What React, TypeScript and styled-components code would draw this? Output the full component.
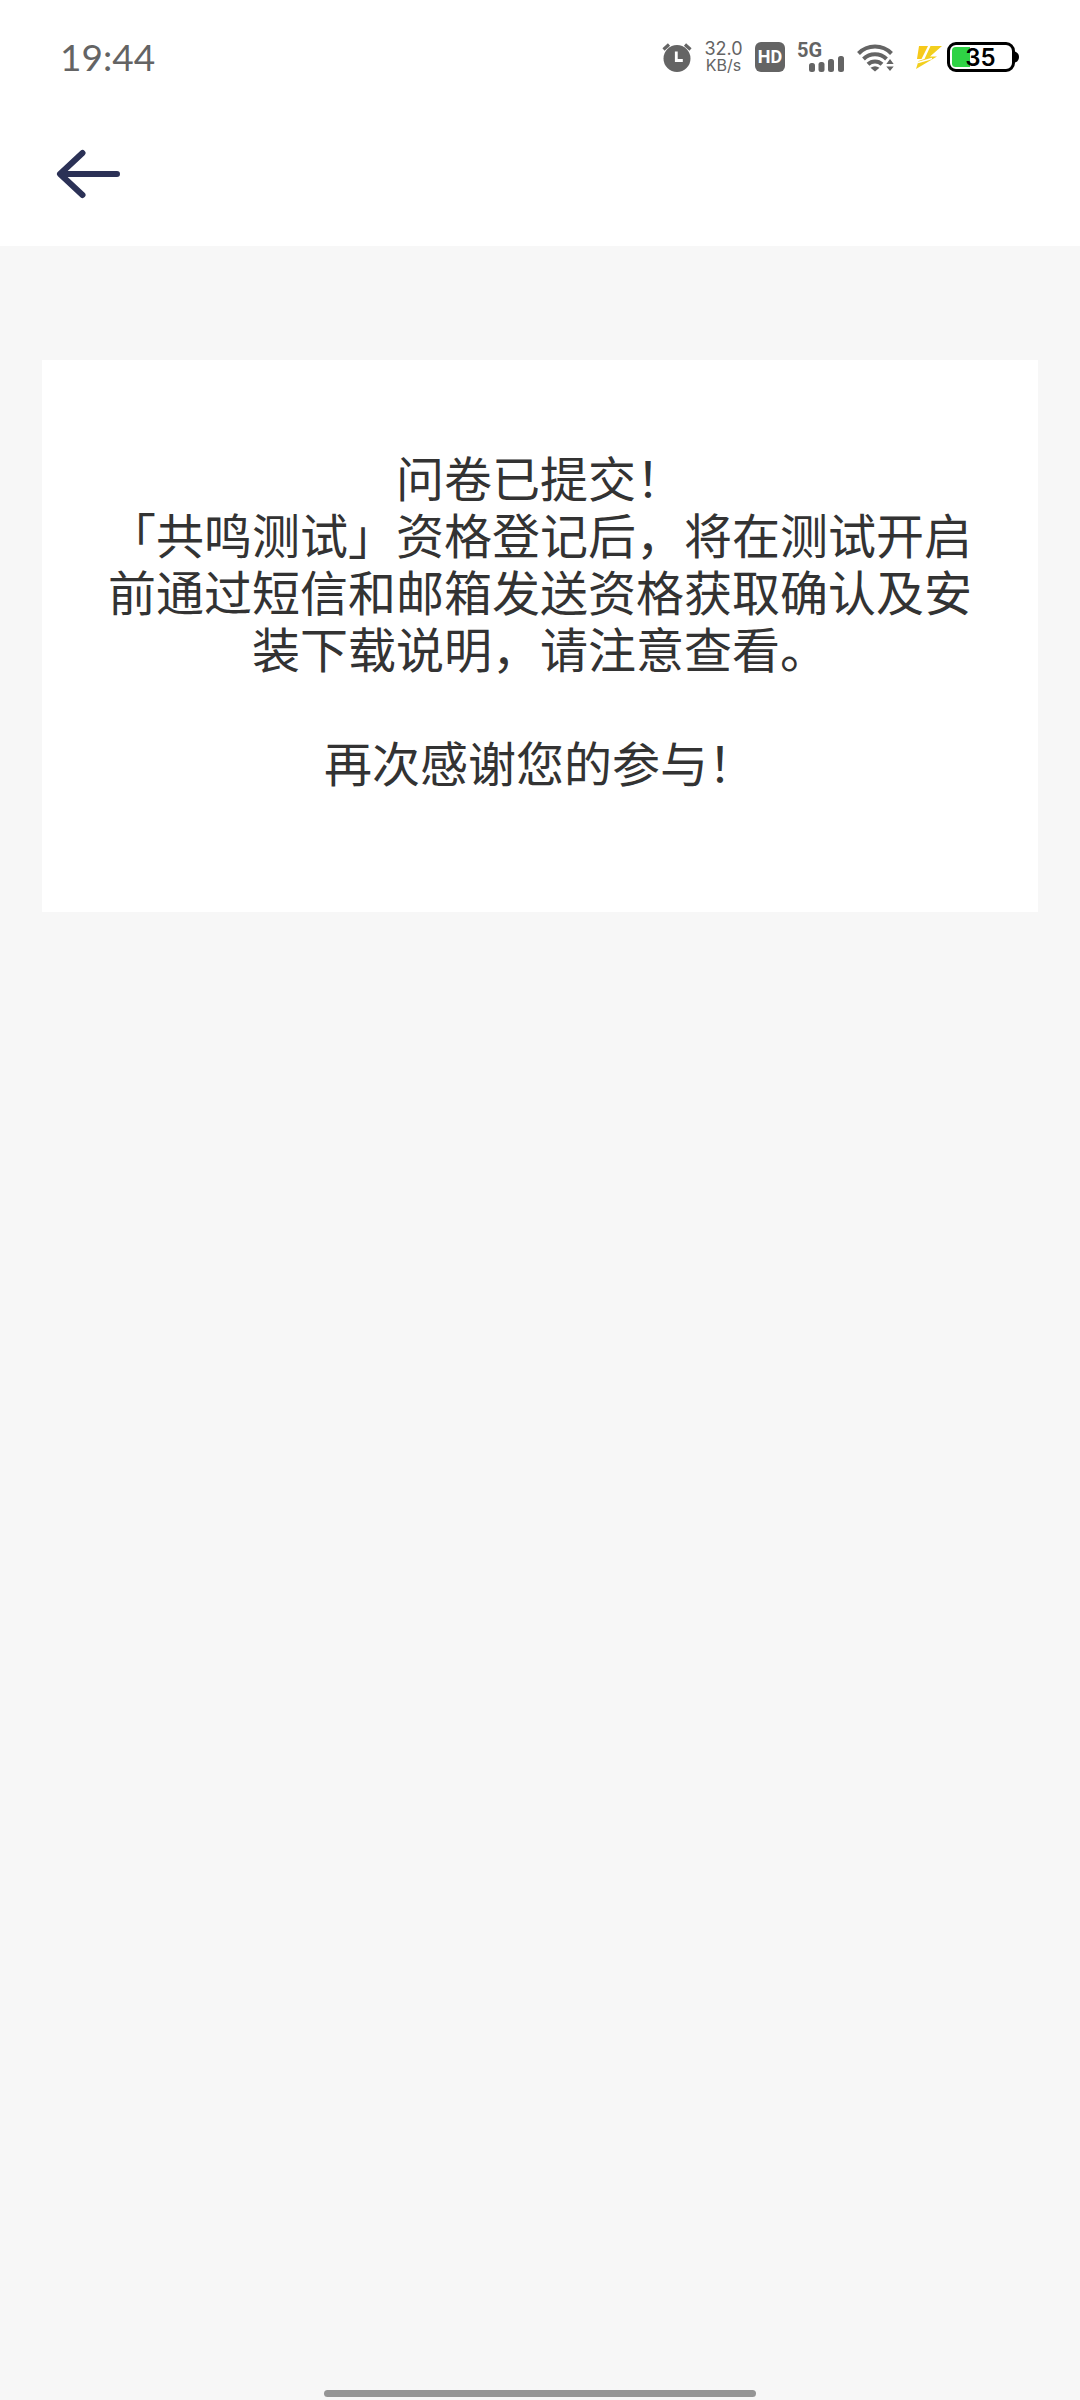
import React from "react";
import styled, { createGlobalStyle } from "styled-components";

const INK = "#646464";
const CJK = '"Liberation Sans", "Noto Sans CJK SC", sans-serif';

const GlobalStyle = createGlobalStyle`
  *, *::before, *::after { box-sizing: border-box; }
  html { background: #f7f7f7; }
  body { margin: 0; font-family: ${CJK}; }
`;

const Page = styled.div`
  display: flex;
  flex-direction: column;
  min-height: 100vh;
  background: #f7f7f7;
`;

const StatusBar = styled.div`
  display: flex;
  align-items: center;
  justify-content: space-between;
  height: 102px;
  padding: 12px 60px 0;
  background: #fff;
  color: ${INK};
`;

const Clock = styled.time`
  font: 400 37px/44px Lato, sans-serif;
`;

const StatusIcons = styled.div`
  display: flex;
  align-items: center;
  gap: 12px;

  svg { display: block; }
`;

const NetSpeed = styled.div`
  display: flex;
  flex-direction: column;
  align-items: center;
  width: 39px;
  font-family: Inter, sans-serif;
  line-height: 17px;
`;

const SpeedValue = styled.span`
  font-size: 18px;
`;

const SpeedUnit = styled.span`
  font-size: 16px;
`;

const NavBar = styled.header`
  display: flex;
  align-items: center;
  height: 144px;
  padding: 0 48px;
  background: #fff;
`;

const BackButton = styled.button`
  display: flex;
  align-items: center;
  justify-content: center;
  width: 80px;
  height: 80px;
  padding: 0;
  border: 0;
  background: none;
  cursor: pointer;
`;

const Content = styled.main`
  flex: 1;
  padding: 114px 42px 0;
`;

const Card = styled.section`
  padding: 92px 66px 118px;
  background: #fff;
`;

const Message = styled.p`
  margin: 0;
  color: #333;
  font-size: 48px;
  line-height: 57px;
  text-align: center;
  text-spacing-trim: space-all;

  & + & { margin-top: 57px; }
`;

const HomeArea = styled.footer`
  display: flex;
  justify-content: center;
  padding-bottom: 3px;
`;

const HomeIndicator = styled.div`
  width: 40%;
  height: 7px;
  border-radius: 4px;
  background: #959595;
`;

const AlarmIcon = () => (
  <svg width="30" height="30" viewBox="0 0 30 30" role="img" aria-label="闹钟">
    <circle cx="15" cy="16.5" r="13.5" fill={INK} />
    <path d="M1.5 7.5 7 2.5M28.5 7.5 23 2.5" stroke={INK} strokeWidth="3.2" />
    <path d="M14.3 9.5v9h6.5" fill="none" stroke="#fff" strokeWidth="2.8" />
  </svg>
);

const HdIcon = () => (
  <svg width="30" height="30" viewBox="0 0 30 30" role="img" aria-label="HD">
    <rect width="30" height="30" rx="6" fill={INK} />
    <text x="15" y="21" textAnchor="middle" fontFamily="Roboto, sans-serif" fontWeight="700" fontSize="18" fill="#fff">HD</text>
  </svg>
);

const SignalIcon = () => (
  <svg width="48" height="42" viewBox="0 -6 48 42" role="img" aria-label="5G">
    <text x="0" y="15" fontFamily="Roboto, sans-serif" fontWeight="700" fontSize="20" fill={INK}>5G</text>
    <g fill={INK}>
      <rect x="12" y="21" width="6" height="9" rx="2.5" />
      <rect x="21.5" y="20" width="6" height="10" rx="2.5" />
      <rect x="31" y="17" width="6" height="13" rx="2.5" />
      <rect x="41" y="14" width="6" height="16" rx="2.5" />
    </g>
  </svg>
);

const WifiIcon = () => (
  <svg width="38" height="30" viewBox="0 0 38 30" role="img" aria-label="WLAN">
    <g fill="none" stroke={INK} strokeWidth="4">
      <path d="M1.5 11.5a23 23 0 0 1 33 0" />
      <path d="M6.5 17a16.5 16.5 0 0 1 23 0" />
      <path d="M11 22.3a10 10 0 0 1 14 0" />
    </g>
    <path d="M13.5 25.8q4.5-3 9 0L18 29.5Z" fill={INK} />
    <path d="m33 17 3.7 5h-7.4ZM33 29l3.7-4.5h-7.4Z" fill={INK} />
  </svg>
);

const PowerIcon = () => (
  <svg width="113" height="30" viewBox="0 0 113 30" role="img" aria-label="充电中 35%">
    <path d="M12 4h9l-6.5 13H10Z" fill="#f7c91a" />
    <path d="M23.500 4H35L23 14.5h7L9 27l2.500-8L17.500 17Z" fill="#f2cf1e" />
    <path d="M11 20.500 25 16.500" stroke="#fff" strokeWidth="1.5" />
    <rect x="41.5" y="1.5" width="65" height="27" rx="7.5" fill="#fff" stroke="#000" strokeWidth="3" />
    <path d="M108 9.5q4 1.5 4 5.500t-4 5.500Z" fill="#000" />
    <path d="M63 5H48.5q-3.500 0-3.500 3.500v13q0 3.500 3.500 3.500H63Z" fill="#2fd345" />
    <text x="73.5" y="24" textAnchor="middle" fontFamily="Inter, sans-serif" fontWeight="600" fontSize="24" fill="#000">35</text>
  </svg>
);

const ArrowLeft = () => (
  <svg width="64" height="50" viewBox="0 0 64 50" aria-hidden="true">
    <path
      d="M26.5 4 4 25l22.5 21M5 25h56"
      fill="none"
      stroke="#2b3156"
      strokeWidth="6"
      strokeLinecap="round"
      strokeLinejoin="round"
    />
  </svg>
);

export default function App() {
  return (
    <Page>
      <GlobalStyle />
      <StatusBar>
        <Clock dateTime="19:44">19:44</Clock>
        <StatusIcons>
          <AlarmIcon />
          <NetSpeed>
            <SpeedValue>32.0</SpeedValue>
            <SpeedUnit>KB/s</SpeedUnit>
          </NetSpeed>
          <HdIcon />
          <SignalIcon />
          <WifiIcon />
          <PowerIcon />
        </StatusIcons>
      </StatusBar>
      <NavBar>
        <BackButton type="button" aria-label="返回">
          <ArrowLeft />
        </BackButton>
      </NavBar>
      <Content>
        <Card>
          <Message>
            问卷已提交！
            <br />
            「共鸣测试」资格登记后，将在测试开启前通过短信和邮箱发送资格获取确认及安装下载说明，请注意查看。
          </Message>
          <Message>再次感谢您的参与！</Message>
        </Card>
      </Content>
      <HomeArea>
        <HomeIndicator />
      </HomeArea>
    </Page>
  );
}
